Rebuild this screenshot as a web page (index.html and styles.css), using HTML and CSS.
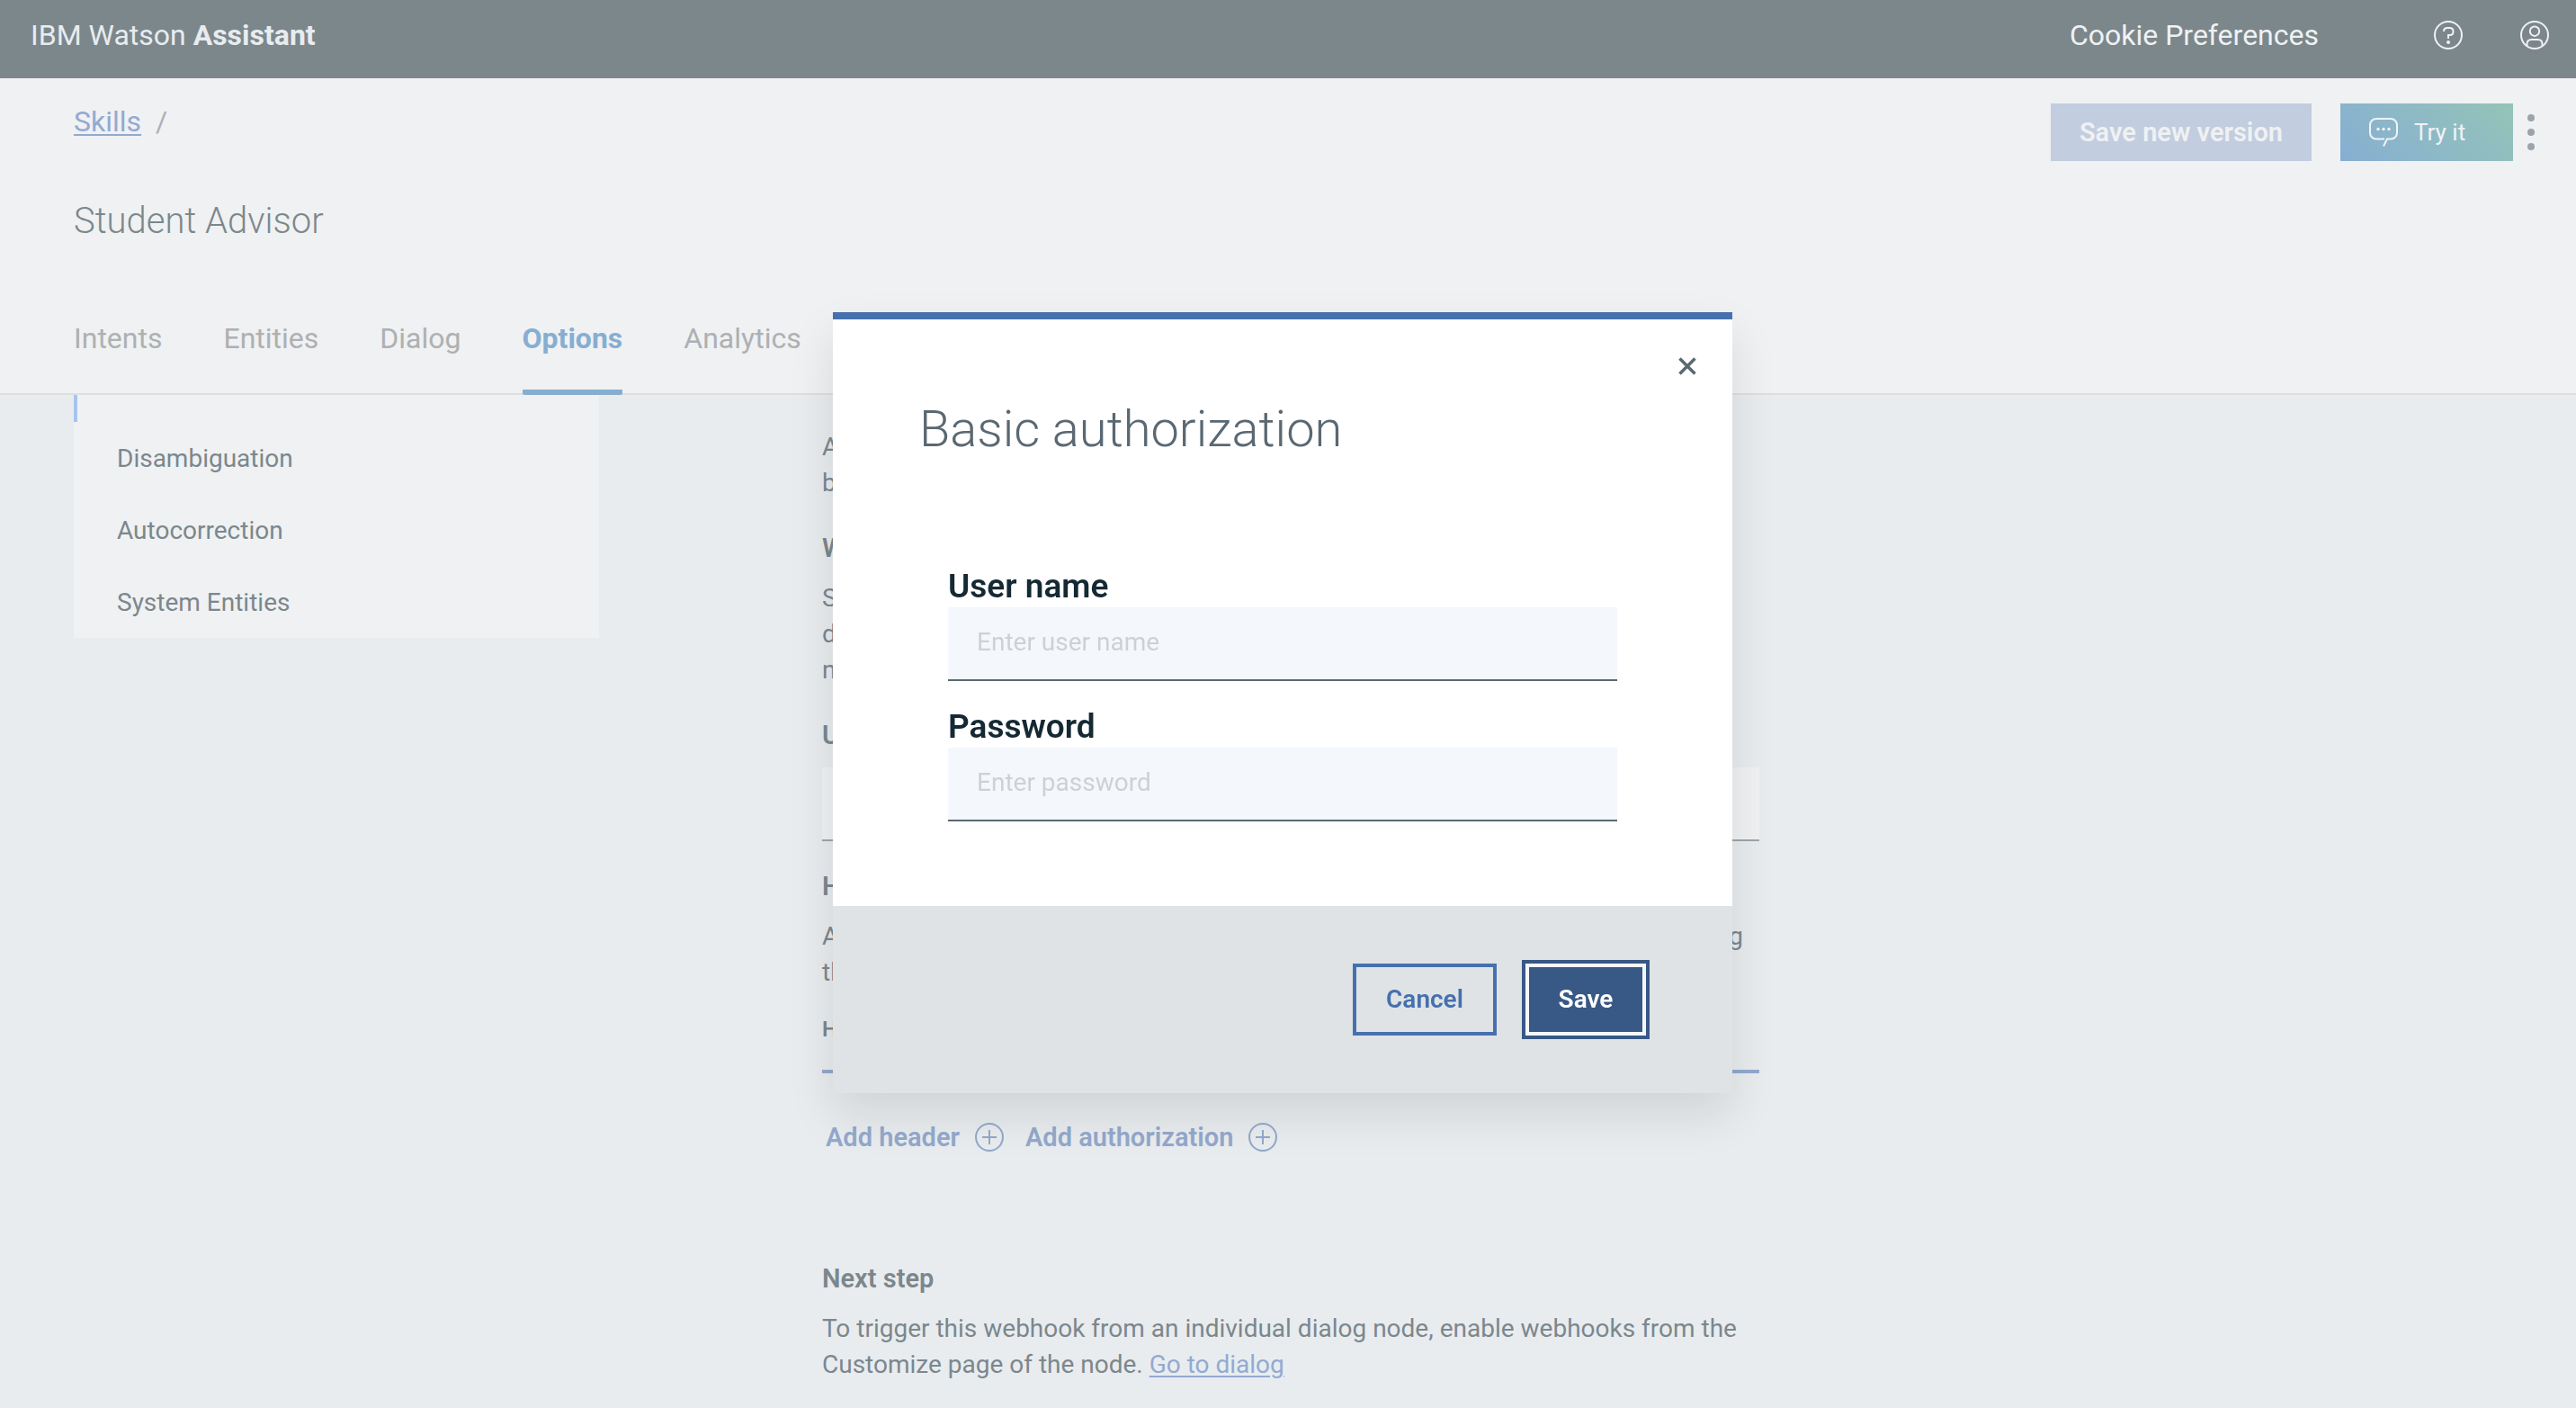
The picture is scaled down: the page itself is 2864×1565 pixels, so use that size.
FILE: index.html
```html
<!DOCTYPE html>
<html lang="en">
<head>
<meta charset="utf-8">
<title>Student Advisor - Options</title>
<link rel="stylesheet" href="styles.css">
</head>
<body>
<div class="app">
  <header class="topbar">
    <div class="brand">IBM Watson <strong>Assistant</strong></div>
    <button class="topbar-link" type="button">Cookie Preferences</button>
    <button class="icon-button" type="button" aria-label="Help">
      <svg viewBox="0 0 32 32" width="32" height="32" fill="none" stroke="currentColor" stroke-width="2">
        <circle cx="16" cy="16" r="15"/>
        <path d="M11 12c0-2.500 1.500-4 4-4h2.500c2.500 0 4 1.500 4 4s-1.500 4-3.500 4h-2v4"/>
        <circle cx="16" cy="24" r="2" fill="currentColor" stroke="none"/>
      </svg>
    </button>
    <button class="icon-button" type="button" aria-label="Account">
      <svg viewBox="0 0 32 32" width="32" height="32" fill="none" stroke="currentColor" stroke-width="2">
        <circle cx="16" cy="16" r="15"/>
        <circle cx="16" cy="11.700" r="5.200"/>
        <path d="M7.500 28v-2c0-3 2-5 5-5h7c3 0 5 2 5 5v2"/>
      </svg>
    </button>
  </header>

  <section class="skill-header">
    <div class="skill-row">
      <nav class="breadcrumb"><a href="#">Skills</a><span>/</span></nav>
      <div class="actions">
        <button class="save-version" type="button">Save new version</button>
        <button class="try-it" type="button">
          <svg viewBox="0 0 32 32" width="32" height="32" fill="none" stroke="currentColor" stroke-width="2">
            <path d="M17 23.500H8C4 23.500 1 20.500 1 16.500V8C1 4 4 1 8 1h16c4 0 7 3 7 7v8.500c0 4-3 7-7 7h-4L16 31.500"/>
            <g fill="currentColor" stroke="none"><circle cx="10" cy="12.500" r="1.700"/><circle cx="16" cy="12.500" r="1.700"/><circle cx="22" cy="12.500" r="1.700"/></g>
          </svg>
          Try it
        </button>
        <button class="overflow" type="button" aria-label="More options">
          <svg viewBox="0 0 8 40" width="8" height="40" fill="currentColor"><circle cx="4" cy="4" r="4"/><circle cx="4" cy="20" r="4"/><circle cx="4" cy="36" r="4"/></svg>
        </button>
      </div>
    </div>
    <h1 class="skill-name">Student Advisor</h1>
    <nav class="tabs">
      <a href="#">Intents</a>
      <a href="#">Entities</a>
      <a href="#">Dialog</a>
      <a href="#" class="active" aria-current="page">Options</a>
      <a href="#">Analytics</a>
    </nav>
  </section>

  <main class="content">
    <nav class="side-nav">
      <a href="#" class="selected">Webhooks</a>
      <a href="#">Disambiguation</a>
      <a href="#">Autocorrection</a>
      <a href="#">System Entities</a>
    </nav>
    <article class="settings">
      <p>A webhook calls out to an external program<br>based on events in your program.</p>
      <h3>Webhook setup</h3>
      <p>Specify the request URL to invoke from<br>dialog nodes. Define it once, then use it from every<br>node.</p>
      <h3><label for="url">URL</label></h3>
      <input class="url-input" id="url" type="text">
      <h3 class="headers-title">Headers</h3>
      <p><span class="wide-line"><span>Add HTTP headers for authorization or any other parameters</span> <span>including</span></span>the request type.</p>
      <div class="header-columns">HEADER NAME</div>
      <div class="add-row">
        <button type="button">Add header
          <svg viewBox="0 0 32 32" width="32" height="32" fill="none" stroke="currentColor" stroke-width="2"><circle cx="16" cy="16" r="15"/><path d="M16 8v16M8 16h16"/></svg>
        </button>
        <button type="button">Add authorization
          <svg viewBox="0 0 32 32" width="32" height="32" fill="none" stroke="currentColor" stroke-width="2"><circle cx="16" cy="16" r="15"/><path d="M16 8v16M8 16h16"/></svg>
        </button>
      </div>
      <h3 class="next-title">Next step</h3>
      <p>To trigger this webhook from an individual dialog node, enable webhooks from the Customize page of the node. <a href="#">Go to dialog</a></p>
    </article>
  </main>
</div>

<div class="overlay">
  <form class="modal" role="dialog" aria-modal="true" aria-labelledby="modal-title">
    <button class="close" type="button" aria-label="Close">
      <svg viewBox="0 0 20 20" width="20" height="20" fill="none" stroke="currentColor" stroke-width="3.500"><path d="M1.500 1.500l17 17M18.500 1.500l-17 17"/></svg>
    </button>
    <h2 id="modal-title">Basic authorization</h2>
    <div class="fields">
      <div class="field">
        <label for="user">User name</label>
        <input id="user" type="text" placeholder="Enter user name">
      </div>
      <div class="field">
        <label for="pass">Password</label>
        <input id="pass" type="password" placeholder="Enter password">
      </div>
    </div>
    <footer class="modal-footer">
      <button class="cancel" type="button">Cancel</button>
      <button class="save" type="submit">Save</button>
    </footer>
  </form>
</div>
</body>
</html>
```
FILE: styles.css
```css
* { box-sizing: border-box; }

body {
  margin: 0;
  font-family: Roboto, "Liberation Sans", sans-serif;
  font-size: 28px;
  line-height: 40px;
  color: #7c878c;
  background: #e8ecef;
}

h1, h2, h3, p { margin: 0; }

button, input {
  font: inherit;
  color: inherit;
  background: none;
  border: 0;
  border-radius: 0;
  padding: 0;
  margin: 0;
}

svg { display: block; flex: none; }

.app {
  display: flex;
  flex-direction: column;
  height: 100vh;
}

/* Top bar */
.topbar {
  display: flex;
  align-items: center;
  gap: 64px;
  padding: 19px 30px 28px 34px;
  background: #7c878c;
  color: #eff1f3;
  font-size: 32px;
}
.brand { flex: 1; color: #e8ecef; }
.topbar-link { margin-right: 64px; }

/* Skill header */
.skill-header {
  padding: 28px 0 0 82px;
  background: #eff1f3;
  border-bottom: 2px solid #dcdee0;
}
.skill-row {
  display: flex;
  justify-content: space-between;
  align-items: flex-start;
  height: 64px;
  padding-right: 30px;
}
.breadcrumb {
  display: flex;
  gap: 16px;
  font-size: 32px;
  color: #aeb0b2;
}
.breadcrumb a, .settings a {
  color: #93aad0;
  text-decoration-thickness: 2px;
  text-underline-offset: 3px;
}
.actions { display: flex; }
.save-version {
  height: 64px;
  padding: 0 32px;
  margin-right: 32px;
  background: #c2cddf;
  color: #eff1f3;
  font-size: 29px;
  font-weight: 600;
}
.try-it {
  display: flex;
  align-items: center;
  gap: 18px;
  width: 192px;
  height: 64px;
  padding: 0 32px;
  background: linear-gradient(45deg, #87aed3, #94c4b8);
  color: #f0f3f5;
  font-size: 26px;
}
.overflow {
  display: flex;
  justify-content: center;
  align-items: center;
  width: 40px;
  height: 64px;
  color: #9ca3a9;
}
.skill-name {
  margin-top: 43px;
  font-size: 40px;
  line-height: 48px;
  font-weight: 300;
}
.tabs {
  display: flex;
  gap: 68px;
  margin: 86px 0 -2px;
  font-size: 32px;
}
.tabs a {
  padding-bottom: 37px;
  border-bottom: 6px solid transparent;
  border-radius: 2px;
  color: #aeb0b2;
  text-decoration: none;
}
.tabs .active {
  color: #87aed1;
  border-color: #87aed1;
  font-weight: 700;
}

/* Scrolled content */
.content {
  flex: 1;
  min-height: 0;
  display: flex;
  align-items: flex-start;
  gap: 248px;
  padding-left: 82px;
  overflow: hidden;
}
.side-nav {
  flex: none;
  width: 584px;
  margin-top: -50px;
  background: #eff1f3;
}
.side-nav a {
  display: block;
  padding: 21px 48px 19px;
  color: inherit;
  text-decoration: none;
}
.side-nav .selected {
  padding-left: 44px;
  border-left: 4px solid #a6c5ee;
}
.settings {
  flex: 0 1 1042px;
  padding-top: 38px;
}
.settings h3 {
  margin: 32px 0 16px;
  font-size: 29px;
  font-weight: 600;
}
.url-input {
  display: block;
  width: 100%;
  height: 82px;
  padding: 0 32px;
  background: #f0f1f2;
  border-bottom: 2px solid #9ca5ab;
}
.settings .headers-title { margin-top: 30px; }
.wide-line {
  display: flex;
  justify-content: space-between;
  padding-right: 18px;
}
.header-columns {
  margin-top: 27px;
  padding-bottom: 29px;
  border-bottom: 4px solid #93a8ce;
  font-size: 24px;
  line-height: 32px;
  font-weight: 600;
}
.add-row {
  display: flex;
  gap: 24px;
  margin-top: 51px;
  padding-left: 4px;
  color: #93a8cb;
  font-size: 29px;
  font-weight: 600;
}
.add-row button {
  display: flex;
  align-items: center;
  gap: 17px;
}
.settings .next-title { margin-top: 117px; }

/* Modal */
.overlay {
  position: fixed;
  inset: 0;
  display: flex;
  align-items: center;
  justify-content: center;
  padding: 0 12px 4px 0;
}
.modal {
  position: relative;
  width: 1000px;
  background: #fff;
  border-top: 8px solid #4670ae;
  box-shadow: 0 24px 48px rgba(0, 0, 0, .1);
}
.close {
  position: absolute;
  top: 42px;
  right: 40px;
  color: #5a6872;
}
.modal h2 {
  padding: 90px 96px 0;
  font-size: 56px;
  line-height: 64px;
  font-weight: 300;
  color: #5a6872;
}
.fields {
  display: flex;
  flex-direction: column;
  gap: 28px;
  padding: 120px 128px 94px;
}
.field label {
  display: block;
  font-size: 37px;
  line-height: 46px;
  font-weight: 600;
  color: #152934;
}
.field input {
  display: block;
  width: 100%;
  height: 82px;
  padding: 0 32px 2px;
  background: #f4f7fb;
  border-bottom: 2px solid #5a6872;
}
.field input::placeholder { color: #cdd1d4; opacity: 1; }
.modal-footer {
  display: flex;
  justify-content: flex-end;
  gap: 32px;
  padding: 64px 96px;
  background: #dfe3e6;
}
.modal-footer button {
  height: 80px;
  font-weight: 600;
}
.cancel {
  width: 160px;
  border: 4px solid #4670ae;
  color: #4670ae;
}
.save {
  width: 134px;
  background: #385885;
  border: 4px solid #f4f7fb;
  outline: 4px solid #385885;
  color: #fff;
}
```
